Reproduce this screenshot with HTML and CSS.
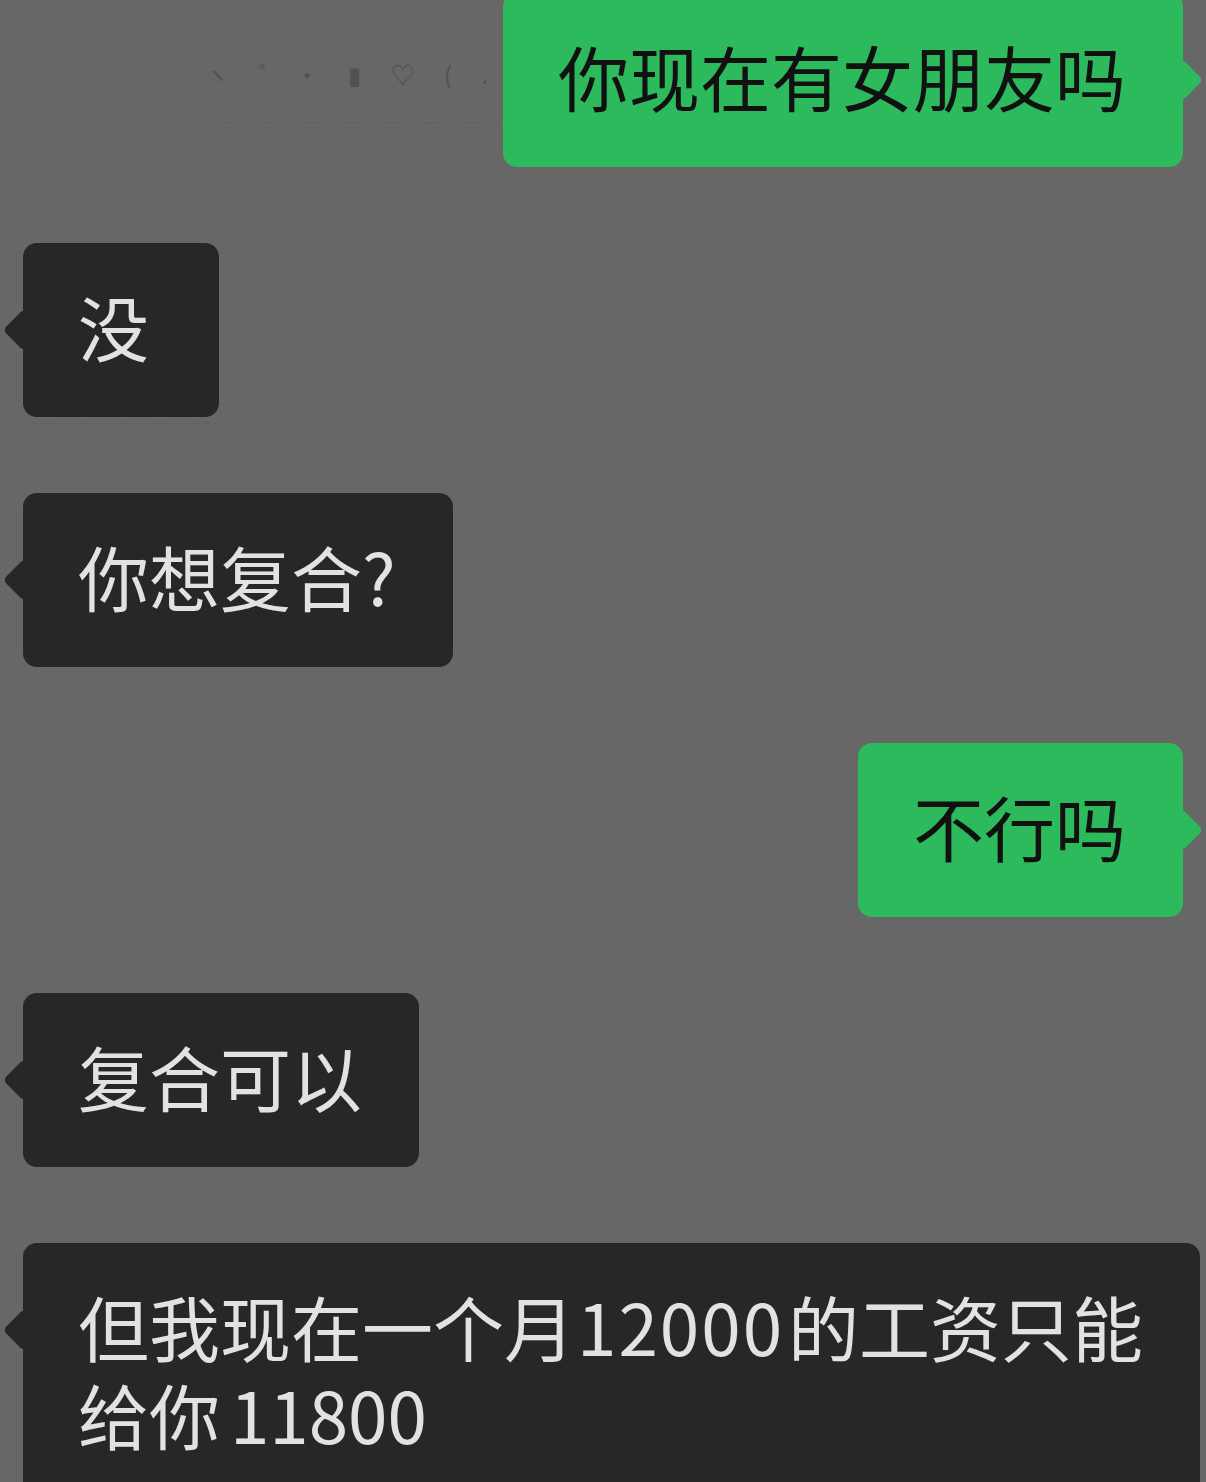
FILE: index.html
```html
<!DOCTYPE html>
<html lang="zh-CN">
<head>
    <meta charset="UTF-8">
    <title>聊天记录</title>
    <link rel="stylesheet" href="styles.css">
</head>
<body>
    <div class="chat">
        <!-- faint leftovers of the screenshot -->
        <div class="ghost ghost-icons">ヽ ˚ · ▮ ♡ ( . ≈</div>
        <div class="ghost-line ghost-line-top"></div>
        <div class="ghost-line ghost-line-mid"></div>

        <div class="row row-me row-first">
            <div class="bubble bubble-me">你现在有女朋友吗</div>
        </div>

        <div class="row row-other">
            <div class="bubble bubble-other bubble-short">没</div>
        </div>

        <div class="row row-other">
            <div class="bubble bubble-other">你想复合?</div>
        </div>

        <div class="row row-me">
            <div class="bubble bubble-me">不行吗</div>
        </div>

        <div class="row row-other">
            <div class="bubble bubble-other">复合可以</div>
        </div>

        <div class="row row-other">
            <div class="bubble bubble-other bubble-wide">但我现在一个月<span class="num">12000</span>的工资只能<br>给你 11800</div>
        </div>
    </div>
</body>
</html>
```

FILE: styles.css
```css
html, body {
    margin: 0;
    padding: 0;
    background: #676767;
}
body {
    font-family: "Noto Sans CJK SC", "Noto Sans", sans-serif;
    width: 1206px;
    height: 1482px;
    overflow: hidden;
}
.chat {
    position: relative;
    display: flex;
    flex-direction: column;
    gap: 76px;
    padding: 0 23px;
}
.row {
    display: flex;
}
.row-me {
    justify-content: flex-end;
}
.row-other {
    justify-content: flex-start;
}
.row-first {
    margin-top: -7px;
}
.bubble {
    position: relative;
    font-size: 71px;
    line-height: 88px;
    padding: 38px 57px 48px 55px;
    border-radius: 14px;
    white-space: nowrap;
}
.bubble-me {
    background: #2cba5c;
    color: #111;
}
.bubble-other {
    background: #272727;
    color: #e2e2e2;
}
.bubble-short {
    min-width: 84px;
}
.bubble-wide {
    width: 1065px;
    word-spacing: -6px;
}
.num {
    letter-spacing: 2px;
    margin: 0 4px 0 2px;
}
/* tails */
.bubble::before {
    content: "";
    position: absolute;
    top: 50%;
    width: 30px;
    height: 30px;
    border-radius: 5px;
    transform: translateY(-50%) rotate(45deg);
}
.bubble-other::before {
    left: -14px;
    background: #272727;
}
.bubble-me::before {
    right: -14px;
    background: #2cba5c;
}
.bubble-wide::before {
    top: 87px;
}
.ghost {
    position: absolute;
    top: 56px;
    left: 205px;
    font-size: 24px;
    letter-spacing: 12px;
    color: #4e4e4e;
    opacity: 0.8;
}
.ghost-line {
    position: absolute;
    height: 0;
    border-top: 2px dashed #626262;
}
.ghost-line-top {
    top: 122px;
    left: 215px;
    width: 285px;
}
.ghost-line-mid {
    top: 423px;
    left: 10px;
    width: 250px;
}
```
